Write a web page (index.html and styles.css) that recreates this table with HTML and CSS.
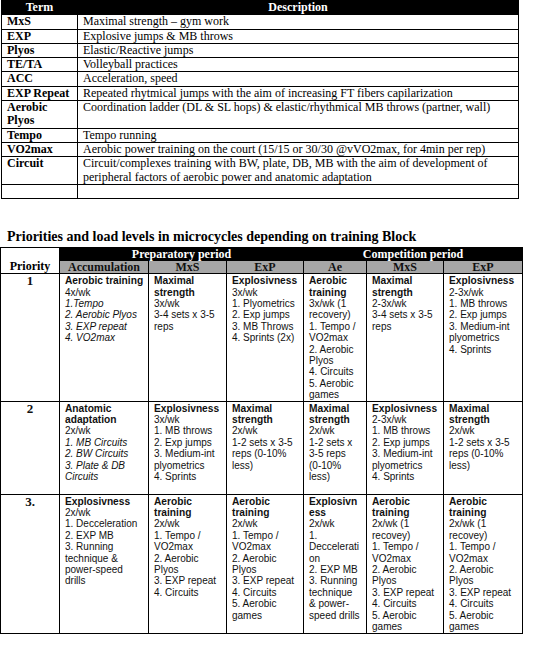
FILE: index.html
```html
<!DOCTYPE html>
<html>
<head>
<meta charset="utf-8">
<link rel="stylesheet" href="styles.css">
</head>
<body>
<table class="terms">
  <colgroup><col class="c-term"><col class="c-desc"></colgroup>
  <thead>
    <tr><th>Term</th><th>Description</th></tr>
  </thead>
  <tbody>
    <tr><td class="t">MxS</td><td>Maximal strength – gym work</td></tr>
    <tr><td class="t">EXP</td><td>Explosive jumps &amp; MB throws</td></tr>
    <tr><td class="t">Plyos</td><td>Elastic/Reactive jumps</td></tr>
    <tr><td class="t">TE/TA</td><td>Volleyball practices</td></tr>
    <tr><td class="t">ACC</td><td>Acceleration, speed</td></tr>
    <tr><td class="t">EXP Repeat</td><td>Repeated rhytmical jumps with the aim of increasing FT fibers capilarization</td></tr>
    <tr><td class="t">Aerobic Plyos</td><td>Coordination ladder (DL &amp; SL hops) &amp; elastic/rhythmical MB throws (partner, wall)</td></tr>
    <tr><td class="t">Tempo</td><td>Tempo running</td></tr>
    <tr><td class="t">VO2max</td><td>Aerobic power training on the court (15/15 or 30/30 @vVO2max, for 4min per rep)</td></tr>
    <tr><td class="t">Circuit</td><td>Circuit/complexes training with BW, plate, DB, MB with the aim of development of<br>peripheral factors of aerobic power and anatomic adaptation</td></tr>
    <tr><td class="t">&nbsp;</td><td>&nbsp;</td></tr>
  </tbody>
</table>

<h2 class="title">Priorities and load levels in microcycles depending on training Block</h2>

<table class="plan">
  <colgroup>
    <col class="w59"><col class="w89"><col class="w78"><col class="w77"><col class="w63"><col class="w77"><col class="w79">
  </colgroup>
  <thead>
    <tr class="period">
      <th class="prio-head" rowspan="2">Priority</th>
      <th colspan="3">Preparatory period</th>
      <th colspan="3" class="split">Competition period</th>
    </tr>
    <tr class="block">
      <th>Accumulation</th><th>MxS</th><th>ExP</th><th>Ae</th><th>MxS</th><th>ExP</th>
    </tr>
  </thead>
  <tbody>
    <tr class="r1">
      <td class="prio">1</td>
      <td><div class="b">Aerobic training</div><div>4x/wk</div><div class="i">1.Tempo</div><div class="i">2. Aerobic Plyos</div><div class="i">3. EXP repeat</div><div class="i">4. VO2max</div></td>
      <td><div class="b">Maximal strength</div><div>3x/wk</div><div>3-4 sets x 3-5 reps</div></td>
      <td><div class="b">Explosivness</div><div>3x/wk</div><div>1. Plyometrics</div><div>2. Exp jumps</div><div>3. MB Throws</div><div>4. Sprints (2x)</div></td>
      <td class="narrow"><div class="b">Aerobic training</div><div>3x/wk (1 recovery)</div><div>1. Tempo / VO2max</div><div>2. Aerobic Plyos</div><div>4. Circuits</div><div>5. Aerobic games</div></td>
      <td><div class="b">Maximal strength</div><div>2-3x/wk</div><div>3-4 sets x 3-5 reps</div></td>
      <td><div class="b">Explosivness</div><div>2-3x/wk</div><div>1. MB throws</div><div>2. Exp jumps</div><div>3. Medium-int plyometrics</div><div>4. Sprints</div></td>
    </tr>
    <tr class="r2">
      <td class="prio">2</td>
      <td><div class="b">Anatomic adaptation</div><div>2x/wk</div><div class="i">1. MB Circuits</div><div class="i">2. BW Circuits</div><div class="i">3. Plate &amp; DB Circuits</div></td>
      <td><div class="b">Explosivness</div><div>3x/wk</div><div>1. MB throws</div><div>2. Exp jumps</div><div>3. Medium-int plyometrics</div><div>4. Sprints</div></td>
      <td><div class="b">Maximal strength</div><div>2x/wk</div><div>1-2 sets x 3-5 reps (0-&#8288;10% less)</div></td>
      <td class="narrow"><div class="b">Maximal strength</div><div>2x/wk</div><div>1-2 sets x 3-5 reps (0-&#8288;10% less)</div></td>
      <td><div class="b">Explosivness</div><div>2-3x/wk</div><div>1. MB throws</div><div>2. Exp jumps</div><div>3. Medium-int plyometrics</div><div>4. Sprints</div></td>
      <td><div class="b">Maximal strength</div><div>2x/wk</div><div>1-2 sets x 3-5 reps (0-&#8288;10% less)</div></td>
    </tr>
    <tr class="r3">
      <td class="prio">3.</td>
      <td><div class="b">Explosivness</div><div>2x/wk</div><div>1. Decceleration</div><div>2. EXP MB</div><div>3. Running technique &amp; power-speed drills</div></td>
      <td><div class="b">Aerobic training</div><div>2x/wk</div><div>1. Tempo / VO2max</div><div>2. Aerobic Plyos</div><div>3. EXP repeat</div><div>4. Circuits</div></td>
      <td><div class="b">Aerobic training</div><div>2x/wk</div><div>1. Tempo / VO2max</div><div>2. Aerobic Plyos</div><div>3. EXP repeat</div><div>4. Circuits</div><div>5. Aerobic games</div></td>
      <td class="narrow brk"><div class="b">Explosivness</div><div>2x/wk</div><div>1. Decceleration</div><div>2. EXP MB</div><div>3. Running technique &amp; power-speed drills</div></td>
      <td><div class="b">Aerobic training</div><div>2x/wk (1 recovey)</div><div>1. Tempo / VO2max</div><div>2. Aerobic Plyos</div><div>3. EXP repeat</div><div>4. Circuits</div><div>5. Aerobic games</div></td>
      <td><div class="b">Aerobic training</div><div>2x/wk (1 recovey)</div><div>1. Tempo / VO2max</div><div>2. Aerobic Plyos</div><div>3. EXP repeat</div><div>4. Circuits</div><div>5. Aerobic games</div></td>
    </tr>
  </tbody>
</table>
</body>
</html>
```

FILE: styles.css
```css
html, body {
  margin: 0;
  padding: 0;
  background: #fff;
  color: #000;
}

body {
  font-family: "Liberation Serif", "Times New Roman", serif;
}

/* ---------- Terms table ---------- */
.terms {
  border-collapse: collapse;
  table-layout: fixed;
  width: 517px;
  margin-left: 1px;
  font-size: 12px;
  line-height: 13.3px;
}

.c-term { width: 76px; }
.c-desc { width: 441px; }

.terms th {
  background: #000;
  color: #fff;
  font-weight: bold;
  text-align: center;
  padding: 0;
  height: 13px;
  border: 1px solid #000;
}

.terms td {
  border: 1px solid #000;
  padding: 0 5px;
  vertical-align: top;
  text-align: left;
}

.terms td.t {
  font-weight: bold;
}

/* ---------- Title ---------- */
.title {
  margin: 30px 0 2px 7px;
  font-size: 14px;
  line-height: 16px;
  font-weight: bold;
}

/* ---------- Plan table ---------- */
.plan {
  border-collapse: collapse;
  table-layout: fixed;
  width: 522px;
  font-family: "Liberation Sans", Arial, sans-serif;
  font-size: 10px;
  line-height: 11.4px;
}

.w59 { width: 59px; }
.w89 { width: 89px; }
.w78 { width: 78px; }
.w77 { width: 77px; }
.w63 { width: 63px; }
.w79 { width: 79px; }

.plan th {
  font-family: "Liberation Serif", "Times New Roman", serif;
  font-weight: bold;
  font-size: 12px;
  line-height: 12px;
  padding: 0;
  text-align: center;
  border: 1px solid #000;
}

.plan .period th {
  background: #000;
  color: #fff;
  height: 12px;
}

.plan .period th.split {
  border-left: 1px solid #fff;
}

.plan .period th.prio-head {
  background: #fff;
  color: #000;
  vertical-align: bottom;
  padding-bottom: 1px;
}

.plan .block th {
  background: #a6a6a6;
  color: #111;
  height: 12px;
}

.plan td {
  border: 1px solid #000;
  padding: 1px 3px 0 5px;
  vertical-align: top;
  text-align: left;
  color: #111;
}

.plan td.prio {
  font-family: "Liberation Serif", "Times New Roman", serif;
  font-weight: bold;
  font-size: 13px;
  line-height: 12px;
  text-align: center;
  padding: 1px 0 0;
}

.plan .b {
  font-weight: bold;
  font-size: 10.2px;
}

.plan .i {
  font-style: italic;
}

.plan td.narrow {
  padding-right: 5px;
}

.plan td.brk {
  overflow-wrap: anywhere;
}

.r1 td { height: 124px; }
.r2 td { height: 91px; }
.r3 td { height: 136px; }
```
